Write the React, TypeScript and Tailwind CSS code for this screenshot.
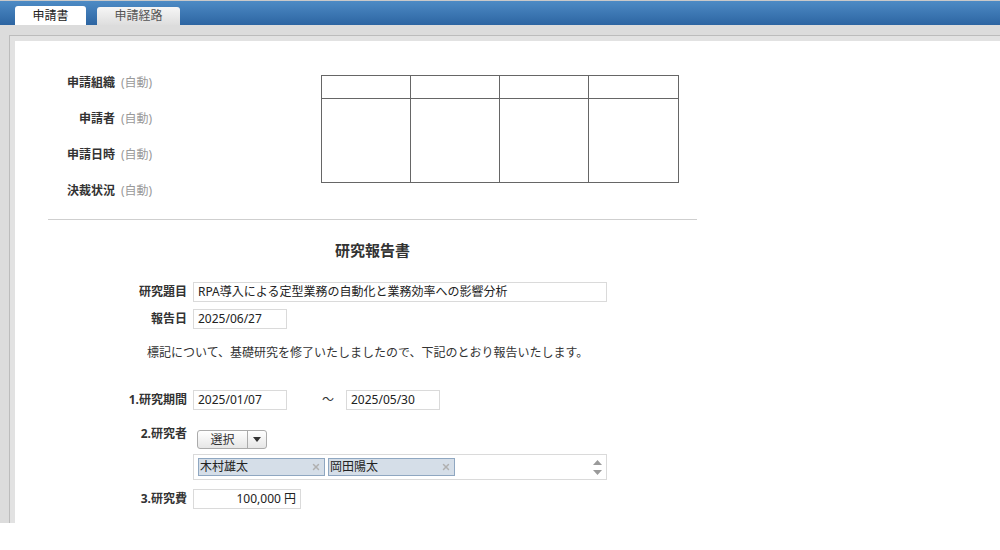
import { X } from 'lucide-react';

const font = { fontFamily: '"Noto Sans", "Noto Sans CJK JP", sans-serif' };

const autoRows = ['申請組織', '申請者', '申請日時', '決裁状況'];

function Field({ value, width, right }: { value: string; width: string; right?: boolean }) {
  return (
    <div
      className={`h-[20px] border border-[#dadada] bg-white px-[4px] text-[12px] leading-[18px] text-[#222] ${width} ${right ? 'text-right' : ''}`}
    >
      {value}
    </div>
  );
}

function Chip({ name }: { name: string }) {
  return (
    <div className="flex h-[18px] w-[127px] items-center justify-between border border-[#8fa7c1] bg-[#d5dee8] pl-[1px] pr-[3px] text-[12px] leading-[16px] text-[#222]">
      <span>{name}</span>
      <X size={10} strokeWidth={3.5} className="text-[#b0b0b0]" />
    </div>
  );
}

export default function App() {
  return (
    <div className="h-[523px] w-[1000px] overflow-hidden bg-[#dcdcdc] text-[#333]" style={font}>
      {/* top bar with tabs */}
      <div className="flex h-[25px] items-end gap-[11px] border-t border-[#c9c9c9] bg-gradient-to-b from-[#4d8bc5] to-[#2d65a2] pl-[15px]">
        <div className="flex h-[19px] w-[71px] items-center justify-center rounded-t-[3px] bg-white text-[12px] text-[#222]">
          申請書
        </div>
        <div className="flex h-[18px] w-[83px] items-center justify-center rounded-t-[3px] bg-gradient-to-b from-[#f6f6f6] to-[#dedede] text-[12px] text-[#555]">
          申請経路
        </div>
      </div>

      {/* frame */}
      <div className="ml-[9px] mt-[10px] h-[490px] border-l border-t border-[#bcbcbc] bg-[#e2e2e2] pl-[5px] pt-[5px]">
        <div className="h-full bg-white">
          {/* header info */}
          <div className="flex pt-[33px]">
            <div className="flex w-[306px] flex-col">
              {autoRows.map((label) => (
                <div key={label} className="flex h-[36px] text-[12px] leading-[18px]">
                  <span className="w-[100px] text-right font-bold text-[#333]">{label}</span>
                  <span className="ml-[6px] text-[#999]">(自動)</span>
                </div>
              ))}
            </div>
            <div className="mt-[1px] grid h-[108px] w-[358px] grid-cols-4 grid-rows-[23px_1fr] border border-[#666]">
              {Array.from({ length: 8 }).map((_, i) => (
                <div
                  key={i}
                  className={`border-[#666] ${i % 4 !== 3 ? 'border-r' : ''} ${i < 4 ? 'border-b' : ''}`}
                />
              ))}
            </div>
          </div>

          <div className="ml-[33px] mt-[1px] w-[649px] border-t border-[#cfcfcf]" />

          <div className="ml-[33px] mt-[20px] w-[649px] text-center text-[15px] font-bold leading-[20px] text-[#333]">
            研究報告書
          </div>

          {/* form */}
          <div className="mt-[22px] flex items-center">
            <span className="w-[172px] text-right text-[12px] font-bold">研究題目</span>
            <div className="ml-[6px]">
              <Field value="RPA導入による定型業務の自動化と業務効率への影響分析" width="w-[414px]" />
            </div>
          </div>

          <div className="mt-[7px] flex items-center">
            <span className="w-[172px] text-right text-[12px] font-bold">報告日</span>
            <div className="ml-[6px]">
              <Field value="2025/06/27" width="w-[94px]" />
            </div>
          </div>

          <p className="ml-[132px] mt-[15px] text-[12px] leading-[18px] text-[#333]">
            標記について、基礎研究を修了いたしましたので、下記のとおり報告いたします。
          </p>

          <div className="mt-[28px] flex items-center">
            <span className="w-[172px] text-right text-[12px] font-bold">1.研究期間</span>
            <div className="ml-[6px] flex items-center">
              <Field value="2025/01/07" width="w-[94px]" />
              <span className="w-[59px] pl-[35px] text-[12px]">～</span>
              <Field value="2025/05/30" width="w-[94px]" />
            </div>
          </div>

          <div className="mt-[15px] flex">
            <span className="w-[172px] text-right text-[12px] font-bold leading-[18px]">2.研究者</span>
            <div className="ml-[6px] flex flex-col">
              <div className="ml-[4px] mt-[5px] flex h-[19px] w-[70px] rounded-[3px] border border-[#ababab] bg-gradient-to-b from-white to-[#e6e6e6] text-[12px] leading-[17px]">
                <span className="w-[50px] border-r border-[#ababab] text-center">選択</span>
                <span className="flex flex-1 items-center justify-center">
                  <svg width="8" height="5" viewBox="0 0 8 5">
                    <path d="M0 0h8L4 5z" fill="#333" />
                  </svg>
                </span>
              </div>
              <div className="mt-[5px] flex h-[26px] w-[414px] items-center justify-between border border-[#dadada] pl-[4px] pr-[4px]">
                <div className="flex gap-[3px]">
                  <Chip name="木村雄太" />
                  <Chip name="岡田陽太" />
                </div>
                <div className="flex flex-col gap-[5px]">
                  <svg width="9" height="5" viewBox="0 0 9 5">
                    <path d="M0 5h9L4.5 0z" fill="#9a9a9a" />
                  </svg>
                  <svg width="9" height="5" viewBox="0 0 9 5">
                    <path d="M0 0h9L4.5 5z" fill="#9a9a9a" />
                  </svg>
                </div>
              </div>
            </div>
          </div>

          <div className="mt-[9px] flex items-center">
            <span className="w-[172px] text-right text-[12px] font-bold">3.研究費</span>
            <div className="ml-[6px]">
              <Field value="100,000 円" width="w-[108px]" right />
            </div>
          </div>
        </div>
      </div>
    </div>
  );
}
